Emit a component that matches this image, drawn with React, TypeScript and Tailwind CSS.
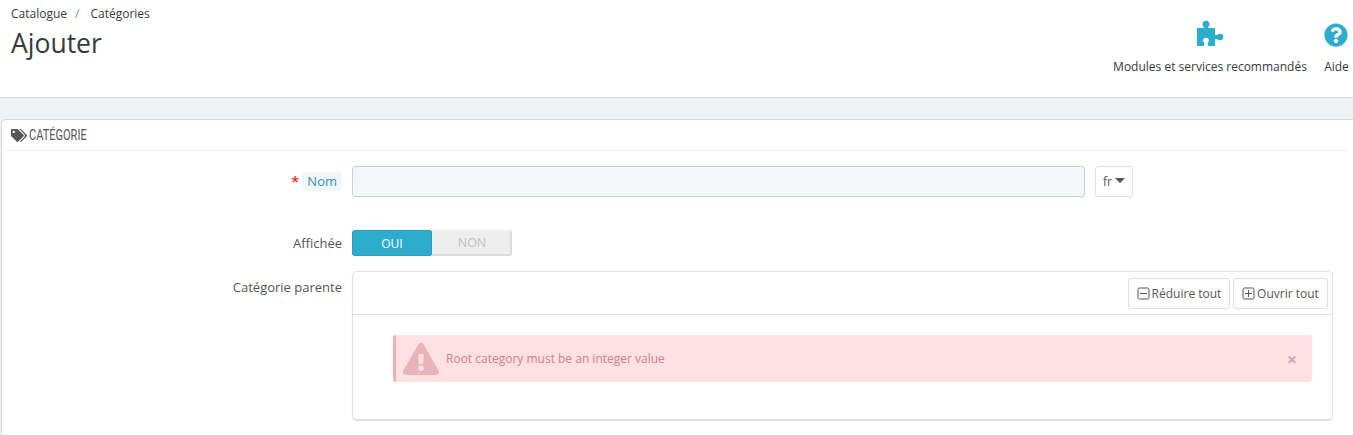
import React from "react";
import {
  FaExclamationTriangle,
  FaQuestionCircle,
  FaTags,
} from "react-icons/fa";

const font = { fontFamily: '"Open Sans", sans-serif' };

const PuzzleIcon = () => (
  <svg width="28" height="26" viewBox="0 0 28 26" className="text-[#2eacce]">
    <g fill="currentColor">
      <path d="M1 8.5q0-.5.5-.5H7q1.5 0 1.5-1.5V5h3v1.5q0 1.5 1.5 1.5h5.500q.5 0 .5.5V14.500q0 .5 1 .5h2v4h-2q-1 0-1 .5V25.500q0 .5-.5.5H13q-1.500 0-1.500-1V22.500h-3V25q0 1-1.500 1H1.500q-.5 0-.5-.5z" />
      <circle cx="10" cy="4.200" r="3.400" />
      <circle cx="24" cy="17" r="3.300" />
    </g>
    <circle cx="10" cy="20.500" r="2.800" fill="white" />
    <rect x="8.500" y="21" width="3" height="5" fill="white" />
  </svg>
);

const MinusSquare = () => (
  <svg width="13" height="13" viewBox="0 0 13 13" fill="none" stroke="currentColor" strokeWidth="1" className="mt-[-1px]">
    <rect x="1" y="1" width="11" height="11" rx="1.500" />
    <path d="M3 6.500h7" />
  </svg>
);

const PlusSquare = () => (
  <svg width="13" height="13" viewBox="0 0 13 13" fill="none" stroke="currentColor" strokeWidth="1" className="mt-[-1px]">
    <rect x="1" y="1" width="11" height="11" rx="1.500" />
    <path d="M3 6.500h7M6.500 3v7" />
  </svg>
);

export default function App() {
  return (
    <div
      className="h-[435px] overflow-hidden bg-[#eff1f2] text-[12px] text-[#555]"
      style={font}
    >
      {/* Header */}
      <div className="flex h-[98px] justify-between border-b border-[#d3d8db] bg-white">
        <div className="pl-[11px] pt-[5px]">
          <div className="flex h-[17px] items-center text-[12px] leading-[17px] text-[#363a41]">
            <span>Catalogue</span>
            <span className="ml-[8px] mr-[11px] text-[#5cb85c]">/</span>
            <span>Catégories</span>
          </div>
          <h1 className="mt-[3px] text-[26.5px] font-normal leading-[36px] text-[#363a41]">Ajouter</h1>
        </div>
        <div className="flex pr-[4px] pt-[20px] text-[#363a41]">
          <div className="flex w-[194px] flex-col items-center">
            <PuzzleIcon />
            <span className="mt-[13px] whitespace-nowrap text-[12px] leading-[16px]">Modules et services recommandés</span>
          </div>
          <div className="ml-[17px] flex flex-col items-center">
            <FaQuestionCircle className="mr-[1px] mt-[3px] h-[24px] w-[24px] text-[#2eacce]" />
            <span className="mt-[12px] text-[12px] leading-[16px]">Aide</span>
          </div>
        </div>
      </div>

      {/* Panel */}
      <div className="ml-[1px] mr-[-4px] mt-[21px] h-[330px] rounded-[5px] border border-[#d3d8db] bg-white pl-[4px] pr-[9px]">
        <div className="flex h-[31px] items-center gap-[2px] border-b border-[#eff1f2] pl-[5px]">
          <FaTags className="h-[13px] w-[16px] text-[#555]" />
          <span className="origin-left scale-x-[0.76] pt-[1px] font-['Roboto',sans-serif] text-[14.5px] leading-[16px] text-[#555]">CATÉGORIE</span>
        </div>

        <div className="pt-[15px]">
          {/* Nom */}
          <div className="flex items-start">
            <div className="flex h-[31px] w-[336px] items-center justify-end">
              <span className="text-[15px] leading-none text-[#f00]">*</span>
              <span className="ml-[3px] rounded-[3px] bg-[#eff7fb] px-[5px] text-[13px] leading-[19px] text-[#3e8cb0]">Nom</span>
            </div>
            <div className="ml-[10px] h-[31px] w-[733px] rounded-[3px] border border-[#bed5e0] bg-[#f3f7f9]" />
            <div className="ml-[10px] flex h-[31px] w-[38px] items-center justify-center gap-[3px] rounded-[3px] border border-[#dfdfdf] bg-white text-[12px] text-[#555]">
              fr
              <span className="mt-[-2px] h-0 w-0 border-x-[5px] border-t-[5px] border-x-transparent border-t-[#555]" />
            </div>
          </div>

          {/* Affichée */}
          <div className="mt-[33px] flex items-center">
            <div className="w-[336px] pt-[1px] text-right text-[13px] text-[#555]">Affichée</div>
            <div className="ml-[10px] flex h-[26px] w-[160px] overflow-hidden rounded-[3px] text-[12px]">
              <div className="flex w-[80px] items-center justify-center rounded-[2px] border border-[#2a9dbc] bg-[#2eacce] pt-[1px] text-white">OUI</div>
              <div className="flex w-[80px] items-center justify-center border-b-2 border-r-2 border-[#dcdcdc] bg-[#eeeeee] pl-[2px] pt-[2px] text-[12.5px] text-[#c0c0c0]">NON</div>
            </div>
          </div>

          {/* Catégorie parente */}
          <div className="mt-[15px] flex items-start">
            <div className="w-[336px] pt-[8px] text-right text-[13px] leading-[17px] text-[#555]">Catégorie parente</div>
            <div className="ml-[10px] h-[149px] w-[981px] rounded-[5px] border border-[#dfdfdf] shadow-[0_1px_1px_#dfdfdf]">
              <div className="flex h-[43px] justify-end gap-[3px] border-b border-[#dfdfdf] pr-[4px] pt-[6px]">
                <div className="flex h-[31px] w-[102px] items-center justify-center gap-[2px] rounded-[3px] border border-[#dfdfdf] pt-[1px] text-[12px] text-[#555]">
                  <MinusSquare />
                  Réduire tout
                </div>
                <div className="flex h-[31px] w-[95px] items-center justify-center gap-[2px] rounded-[3px] border border-[#dfdfdf] pt-[1px] text-[12px] text-[#555]">
                  <PlusSquare />
                  Ouvrir tout
                </div>
              </div>
              <div className="pl-[40px] pt-[20px]">
                <div className="flex h-[47px] w-[919px] items-center rounded-[3px] border-l-[3px] border-[#e8b1b8] bg-[#ffe0e3] pl-[7px] pr-[15px] text-[#d27f88]">
                  <FaExclamationTriangle className="h-[34px] w-[36px] text-[#e9b3ba]" />
                  <span className="ml-[7px] flex-1 text-[12px]">Root category must be an integer value</span>
                  <span className="text-[18px] font-bold leading-none text-[#cfa9ae]">×</span>
                </div>
              </div>
            </div>
          </div>
        </div>
      </div>
    </div>
  );
}
